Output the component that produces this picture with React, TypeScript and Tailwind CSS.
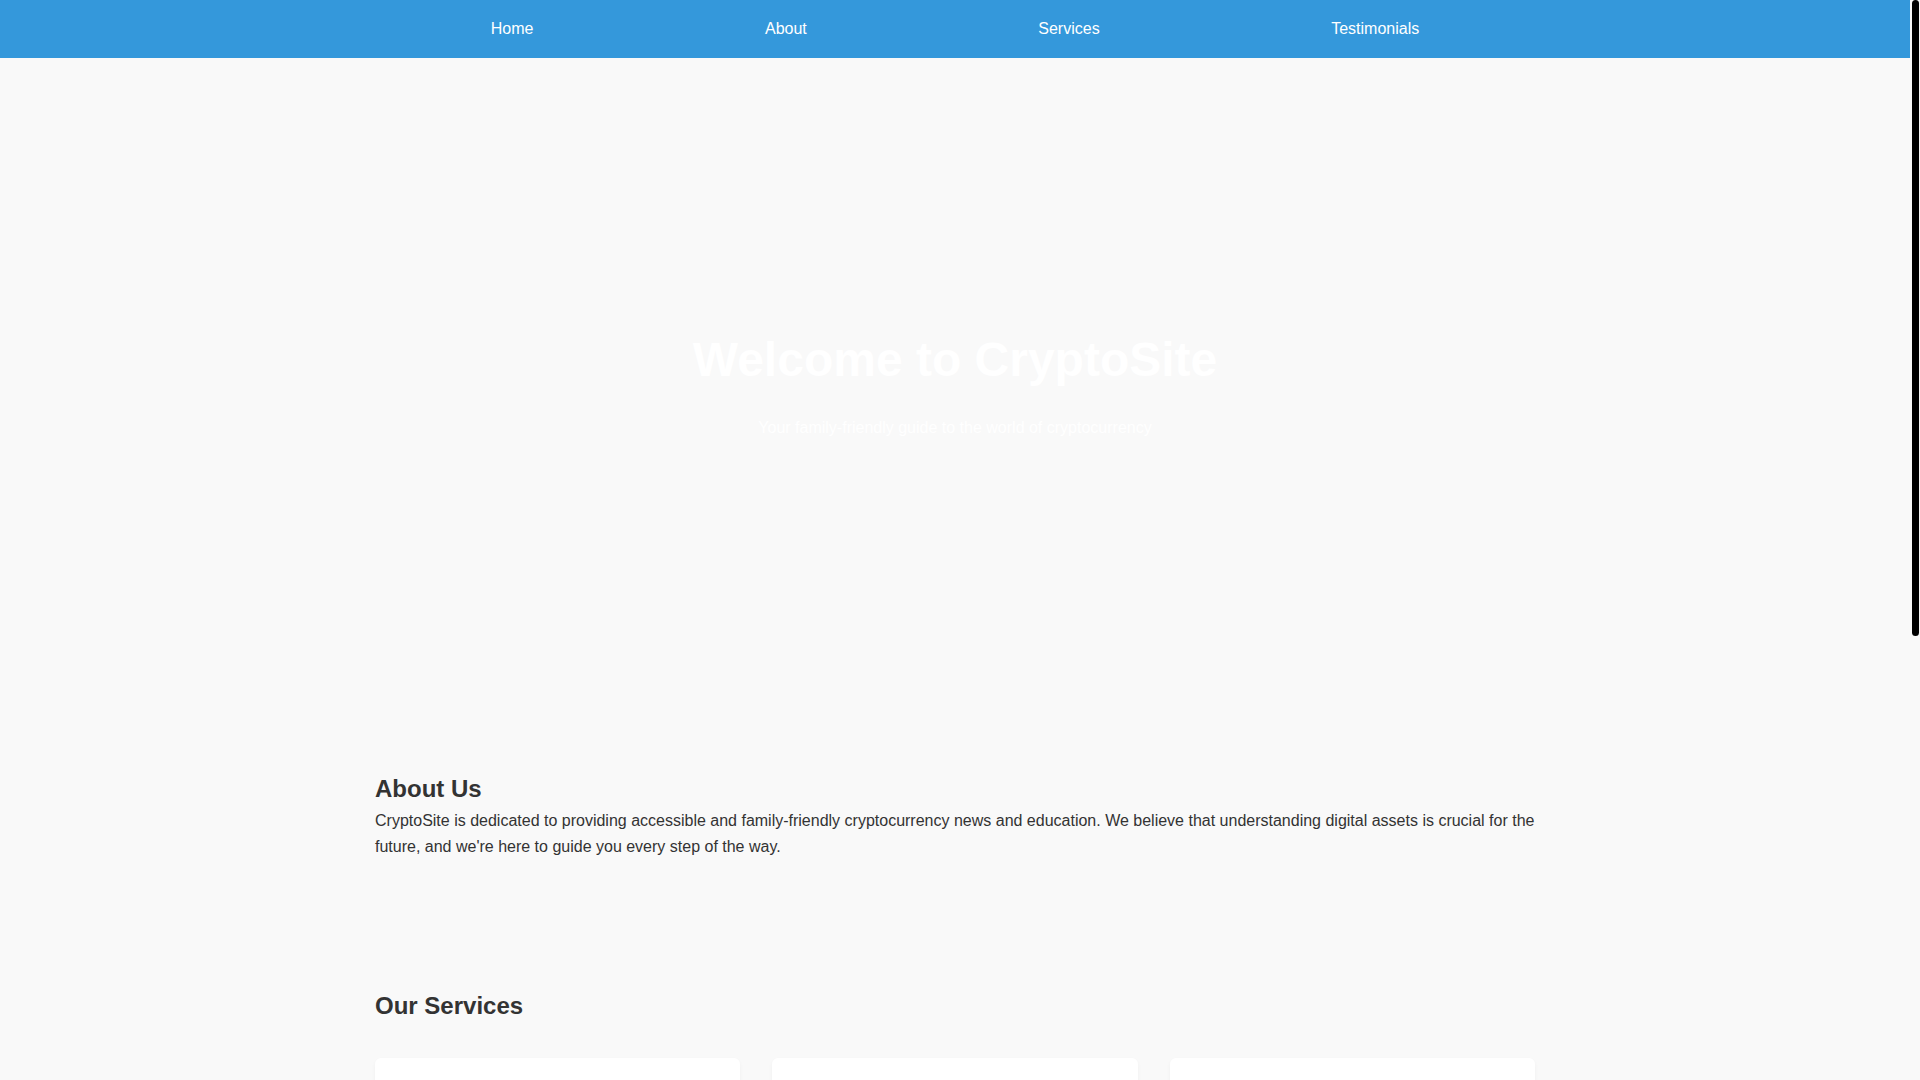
const navLinks = ['Home', 'About', 'Services', 'Testimonials'];

const services = [
  {
    title: 'Crypto News',
    text: 'Stay up to date with the latest happenings in the cryptocurrency world, explained in plain language for the whole family.',
  },
  {
    title: 'Education',
    text: 'Learn the basics of blockchain, wallets and digital assets with easy guides, videos and step-by-step tutorials.',
  },
  {
    title: 'Safety Tips',
    text: 'Protect your savings with practical advice on avoiding scams and keeping your digital assets secure.',
  },
];

const testimonials = [
  {
    quote: '"CryptoSite made it easy for my kids and me to understand how cryptocurrency works. Highly recommended!"',
    name: '- Sarah M.',
  },
  {
    quote: '"Clear, honest and friendly. The best place to start learning about digital assets."',
    name: '- James T.',
  },
];

// the reference was shot with a visible page scrollbar; drawn here as an overlay strip
function ScrollStrip() {
  return (
    <div className="fixed top-0 right-0 h-screen w-[10px] bg-[#f9f9f9] flex justify-center">
      <div className="w-[7px] h-[636px] rounded-full bg-black"></div>
    </div>
  );
}

export default function App() {
  return (
    <div className="min-h-screen pr-[10px] bg-[#f9f9f9] text-[#333] font-['Liberation_Sans',Arial,sans-serif] text-base">
      <header className="bg-[#3498db]">
        <nav className="max-w-[1160px] mx-auto">
          <ul className="flex justify-around">
            {navLinks.map((l) => (
              <li key={l}>
                <a href={`#${l.toLowerCase()}`} className="block py-[17px] leading-6 text-white">{l}</a>
              </li>
            ))}
          </ul>
        </nav>
      </header>

      <section id="home" className="h-[662px] pb-[3px] flex flex-col items-center justify-center text-center text-white">
        <h1 className="text-5xl leading-none font-bold mb-8">Welcome to CryptoSite</h1>
        <p className="leading-6">Your family-friendly guide to the world of cryptocurrency</p>
      </section>

      <section id="about" className="max-w-[1160px] mx-auto pt-[50px] pb-[63px]">
        <h2 className="text-2xl leading-[38px] font-bold">About Us</h2>
        <p className="leading-[26px]">
          CryptoSite is dedicated to providing accessible and family-friendly cryptocurrency news and education. We believe that understanding digital assets is crucial for the future, and we're here to guide you every step of the way.
        </p>
      </section>

      <section id="services" className="max-w-[1160px] mx-auto pt-[64px] pb-[63px]">
        <h2 className="text-2xl leading-[38px] font-bold mb-[33px]">Our Services</h2>
        <div className="grid grid-cols-3 gap-8">
          {services.map((s) => (
            <div key={s.title} className="bg-white rounded-md p-5 shadow-[0_2px_4px_rgba(0,0,0,0.04)]">
              <h3 className="text-xl leading-8 font-bold mb-2">{s.title}</h3>
              <p className="leading-[26px]">{s.text}</p>
            </div>
          ))}
        </div>
      </section>

      <section id="testimonials" className="max-w-[1160px] mx-auto pt-[63px] pb-[80px]">
        <h2 className="text-2xl leading-[38px] font-bold mb-[34px]">Testimonials</h2>
        <div className="flex flex-col gap-5">
          {testimonials.map((t) => (
            <div key={t.name} className="bg-white rounded-md p-5 shadow-[0_2px_4px_rgba(0,0,0,0.04)]">
              <p className="leading-[26px] italic">{t.quote}</p>
              <p className="leading-[26px] mt-2 font-bold">{t.name}</p>
            </div>
          ))}
        </div>
      </section>

      <footer className="bg-[#333] text-white text-center py-8">
        <p className="leading-6">© 2024 CryptoSite. All rights reserved.</p>
      </footer>

      <ScrollStrip />
    </div>
  );
}
